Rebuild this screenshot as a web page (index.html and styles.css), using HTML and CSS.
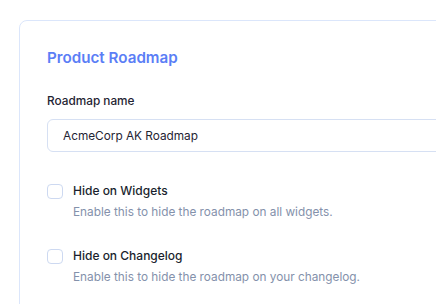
FILE: index.html
```html
<!DOCTYPE html>
<html lang="en">
<head>
    <meta charset="UTF-8">
    <meta name="viewport" content="width=device-width, initial-scale=1.0">
    <title>Product Roadmap</title>
    <link rel="stylesheet" href="styles.css">
</head>
<body>
    <div class="card">
        <h2 class="card-title">Product Roadmap</h2>

        <div class="field">
            <label for="roadmap-name">Roadmap name</label>
            <input type="text" id="roadmap-name" value="AcmeCorp AK Roadmap">
        </div>

        <div class="option">
            <span class="checkbox"></span>
            <div class="option-text">
                <div class="option-title">Hide on Widgets</div>
                <div class="option-desc">Enable this to hide the roadmap on all widgets.</div>
            </div>
        </div>

        <div class="option">
            <span class="checkbox"></span>
            <div class="option-text">
                <div class="option-title">Hide on Changelog</div>
                <div class="option-desc">Enable this to hide the roadmap on your changelog.</div>
            </div>
        </div>
    </div>
</body>
</html>
```

FILE: styles.css
```css
html, body {
    margin: 0;
    overflow: hidden;
}

body {
    font-family: 'Inter', 'Noto Sans', sans-serif;
    background-color: #ffffff;
    color: #1f2433;
    padding: 20px 0 0 19px;
    height: 304px;
    box-sizing: border-box;
}

.card {
    width: 520px;
    height: 400px;
    border: 1px solid #dbe6fb;
    border-radius: 8px;
    padding: 27px 27px 0 27px;
    box-sizing: border-box;
}

.card-title {
    margin: 0;
    font-size: 15.2px;
    line-height: 20px;
    font-weight: 600;
    color: #5b7ef6;
}

.field {
    margin-top: 25px;
    display: flex;
    flex-direction: column;
    gap: 10px;
}

.field label {
    font-size: 11.8px;
    line-height: 16px;
    font-weight: 500;
    color: #1f2433;
}

.field input {
    height: 33px;
    box-sizing: border-box;
    border: 1px solid #d6e0f3;
    border-radius: 6px;
    padding: 0 15px;
    font-family: inherit;
    font-size: 11.8px;
    color: #1f2433;
    outline: none;
}

.option {
    display: flex;
    gap: 10px;
    margin-top: 30px;
}

.option + .option {
    margin-top: 26px;
}

.checkbox {
    flex: none;
    width: 16px;
    height: 15px;
    margin-top: 2px;
    border: 1px solid #cdd9f1;
    border-radius: 4px;
    box-sizing: border-box;
}

.option-title {
    font-size: 12px;
    line-height: 18px;
    font-weight: 550;
    color: #1a1f2e;
}

.option-desc {
    margin-top: 3px;
    font-size: 11.8px;
    line-height: 18px;
    color: #8491ab;
}
```
